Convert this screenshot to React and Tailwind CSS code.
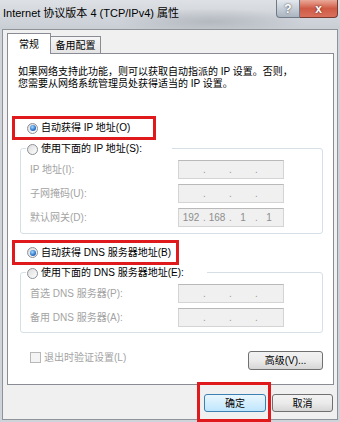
import React from 'react'

const FONT = "font-['Liberation_Sans','Noto_Sans_CJK_SC',sans-serif]"

function Radio({ checked }) {
  return (
    <span className="w-[11px] h-[11px] rounded-full border border-[#8c9096] bg-gradient-to-br from-[#dcdcdc] to-[#ffffff] flex items-center justify-center shrink-0">
      {checked && (
        <span className="w-[6px] h-[6px] rounded-full bg-[radial-gradient(circle_at_40%_35%,#a6dcff,#2a72c8_60%,#174d92)]" />
      )}
    </span>
  )
}

function IpBox({ value }) {
  const parts = value || ['', '', '', '']
  return (
    <div className="w-[106px] h-[19px] bg-[#f0f0f0] border border-[#d4d4d4] border-t-[#b9b9b9] flex items-center text-[10px] text-[#8e8e8e]">
      {parts.map((p, i) => (
        <div key={i} className="flex items-center">
          <span className="w-[24px] text-center">{p}</span>
          {i < 3 && <span className="w-[2px] text-center text-[#9a9a9a]">.</span>}
        </div>
      ))}
    </div>
  )
}

function Row({ label, value }) {
  return (
    <div className="flex items-center h-[19px]">
      <span className="w-[148px] text-[10px] text-[#a3a3a3] leading-none">{label}</span>
      <IpBox value={value} />
    </div>
  )
}

function Button({ children, primary, className = '' }) {
  return (
    <div
      className={
        primary
          ? `h-[18px] rounded-[3px] border border-[#3c7fb1] bg-gradient-to-b from-[#eaf6fd] to-[#bee6fd] flex items-center justify-center text-[10px] text-black ${className}`
          : `h-[18px] rounded-[3px] border border-[#707070] bg-gradient-to-b from-[#f2f2f2] via-[#ebebeb] to-[#d6d6d6] flex items-center justify-center text-[10px] text-black ${className}`
      }
    >
      {children}
    </div>
  )
}

export default function App() {
  return (
    <div className={`w-[340px] h-[422px] overflow-hidden relative bg-[#cfd4da] ${FONT}`}>
      {/* Title bar - glass with blurred backdrop */}
      <div className="h-[29px] flex items-start bg-[radial-gradient(ellipse_28%_45%_at_62%_75%,#b4b9bf,transparent),linear-gradient(#dde0e4,#c9ced5)]">
        <div className="pl-[3px] pt-[6px] text-[11px] leading-[14px] text-black">
          Internet 协议版本 4 (TCP/IPv4) 属性
        </div>
        <div className="ml-auto mr-[2px] flex">
          <div className="w-[24px] h-[18px] rounded-bl-[4px] border border-t-0 border-[#707a86] bg-gradient-to-b from-[#e4e8ee] to-[#aab4c0] flex items-center justify-center text-[12px] font-bold text-white [text-shadow:0_0_2px_#333]">
            ?
          </div>
          <div className="w-[38px] h-[18px] rounded-br-[4px] border border-t-0 border-l-0 border-[#7a3a30] bg-gradient-to-b from-[#e9a99a] via-[#cf5a45] to-[#d9705c] flex items-center justify-center text-[12px] font-bold text-white [text-shadow:0_0_2px_#5a1a10]">
            x
          </div>
        </div>
      </div>

      {/* Client area */}
      <div className="ml-[2px] w-[336px] h-[391px] border border-[#8e9399] bg-[#f0f0f0]">
        {/* Tabs */}
        <div className="ml-[4px] mt-[3px] h-[20px] flex items-end">
          <div className="relative z-10 w-[44px] h-[21px] mb-[-1px] bg-white border border-b-0 border-[#898c95] flex items-center justify-center text-[10px] text-black">
            常规
          </div>
          <div className="w-[50px] h-[17px] border border-b-0 border-l-0 border-[#898c95] bg-gradient-to-b from-[#f6f6f6] to-[#e4e4e4] flex items-center justify-center text-[10px] text-black">
            备用配置
          </div>
        </div>

        {/* Tab panel */}
        <div className="ml-[4px] w-[327px] h-[332px] bg-white border border-[#898c95] text-[10px] text-black">
          <p className="pl-[10px] pt-[12px] leading-[12px]">
            如果网络支持此功能，则可以获取自动指派的 IP 设置。否则，
            <br />
            您需要从网络系统管理员处获得适当的 IP 设置。
          </p>

          {/* IP section */}
          <div className="ml-[4px] mt-[26px] w-[144px] h-[24px] border-[3px] border-[#e0191d] flex items-center pl-[12px] gap-[3px]">
            <Radio checked />
            <span className="leading-none">自动获得 IP 地址(O)</span>
          </div>
          <div className="relative z-10 mt-[2px] mb-[-8px] ml-[18px] w-[146px] h-[14px] bg-white flex items-center gap-[3px] pl-px">
            <Radio />
            <span className="leading-none">使用下面的 IP 地址(S):</span>
          </div>
          <div className="ml-[12px] w-[303px] h-[86px] rounded-[3px] border border-[#d5dfe5] pt-[11px] pl-[9px] flex flex-col gap-[5px]">
            <Row label="IP 地址(I):" />
            <Row label="子网掩码(U):" />
            <Row label="默认网关(D):" value={['192', '168', '1', '1']} />
          </div>

          {/* DNS section */}
          <div className="ml-[4px] mt-[6px] w-[167px] h-[25px] border-[3px] border-[#e0191d] flex items-center pl-[12px] gap-[3px]">
            <Radio checked />
            <span className="leading-none">自动获得 DNS 服务器地址(B)</span>
          </div>
          <div className="relative z-10 mt-[1px] mb-[-8px] ml-[18px] w-[181px] h-[14px] bg-white flex items-center gap-[3px] pl-px">
            <Radio />
            <span className="leading-none">使用下面的 DNS 服务器地址(E):</span>
          </div>
          <div className="ml-[12px] w-[303px] h-[61px] rounded-[3px] border border-[#d5dfe5] pt-[11px] pl-[9px] flex flex-col gap-[5px]">
            <Row label="首选 DNS 服务器(P):" />
            <Row label="备用 DNS 服务器(A):" />
          </div>

          {/* Validate + advanced */}
          <div className="mt-[18px] ml-[22px] mr-[10px] flex items-start justify-between">
            <div className="flex items-center gap-[3px] mt-[1px]">
              <span className="w-[11px] h-[11px] border border-[#b8b8b8] bg-[#f4f4f4]" />
              <span className="text-[#a3a3a3] leading-none">退出时验证设置(L)</span>
            </div>
            <Button className="w-[75px] h-[19px]">高级(V)...</Button>
          </div>
        </div>

        {/* Dialog buttons */}
        <div className="mt-[9px] pr-[4px] flex justify-end gap-[6px]">
          <div className="relative">
            <Button primary className="w-[62px]">确定</Button>
            <div className="absolute -left-[7px] -top-[12px] -right-[5px] -bottom-[10px] border-[3px] border-[#e0191d] z-20" />
          </div>
          <Button className="w-[61px]">取消</Button>
        </div>
      </div>
    </div>
  )
}
